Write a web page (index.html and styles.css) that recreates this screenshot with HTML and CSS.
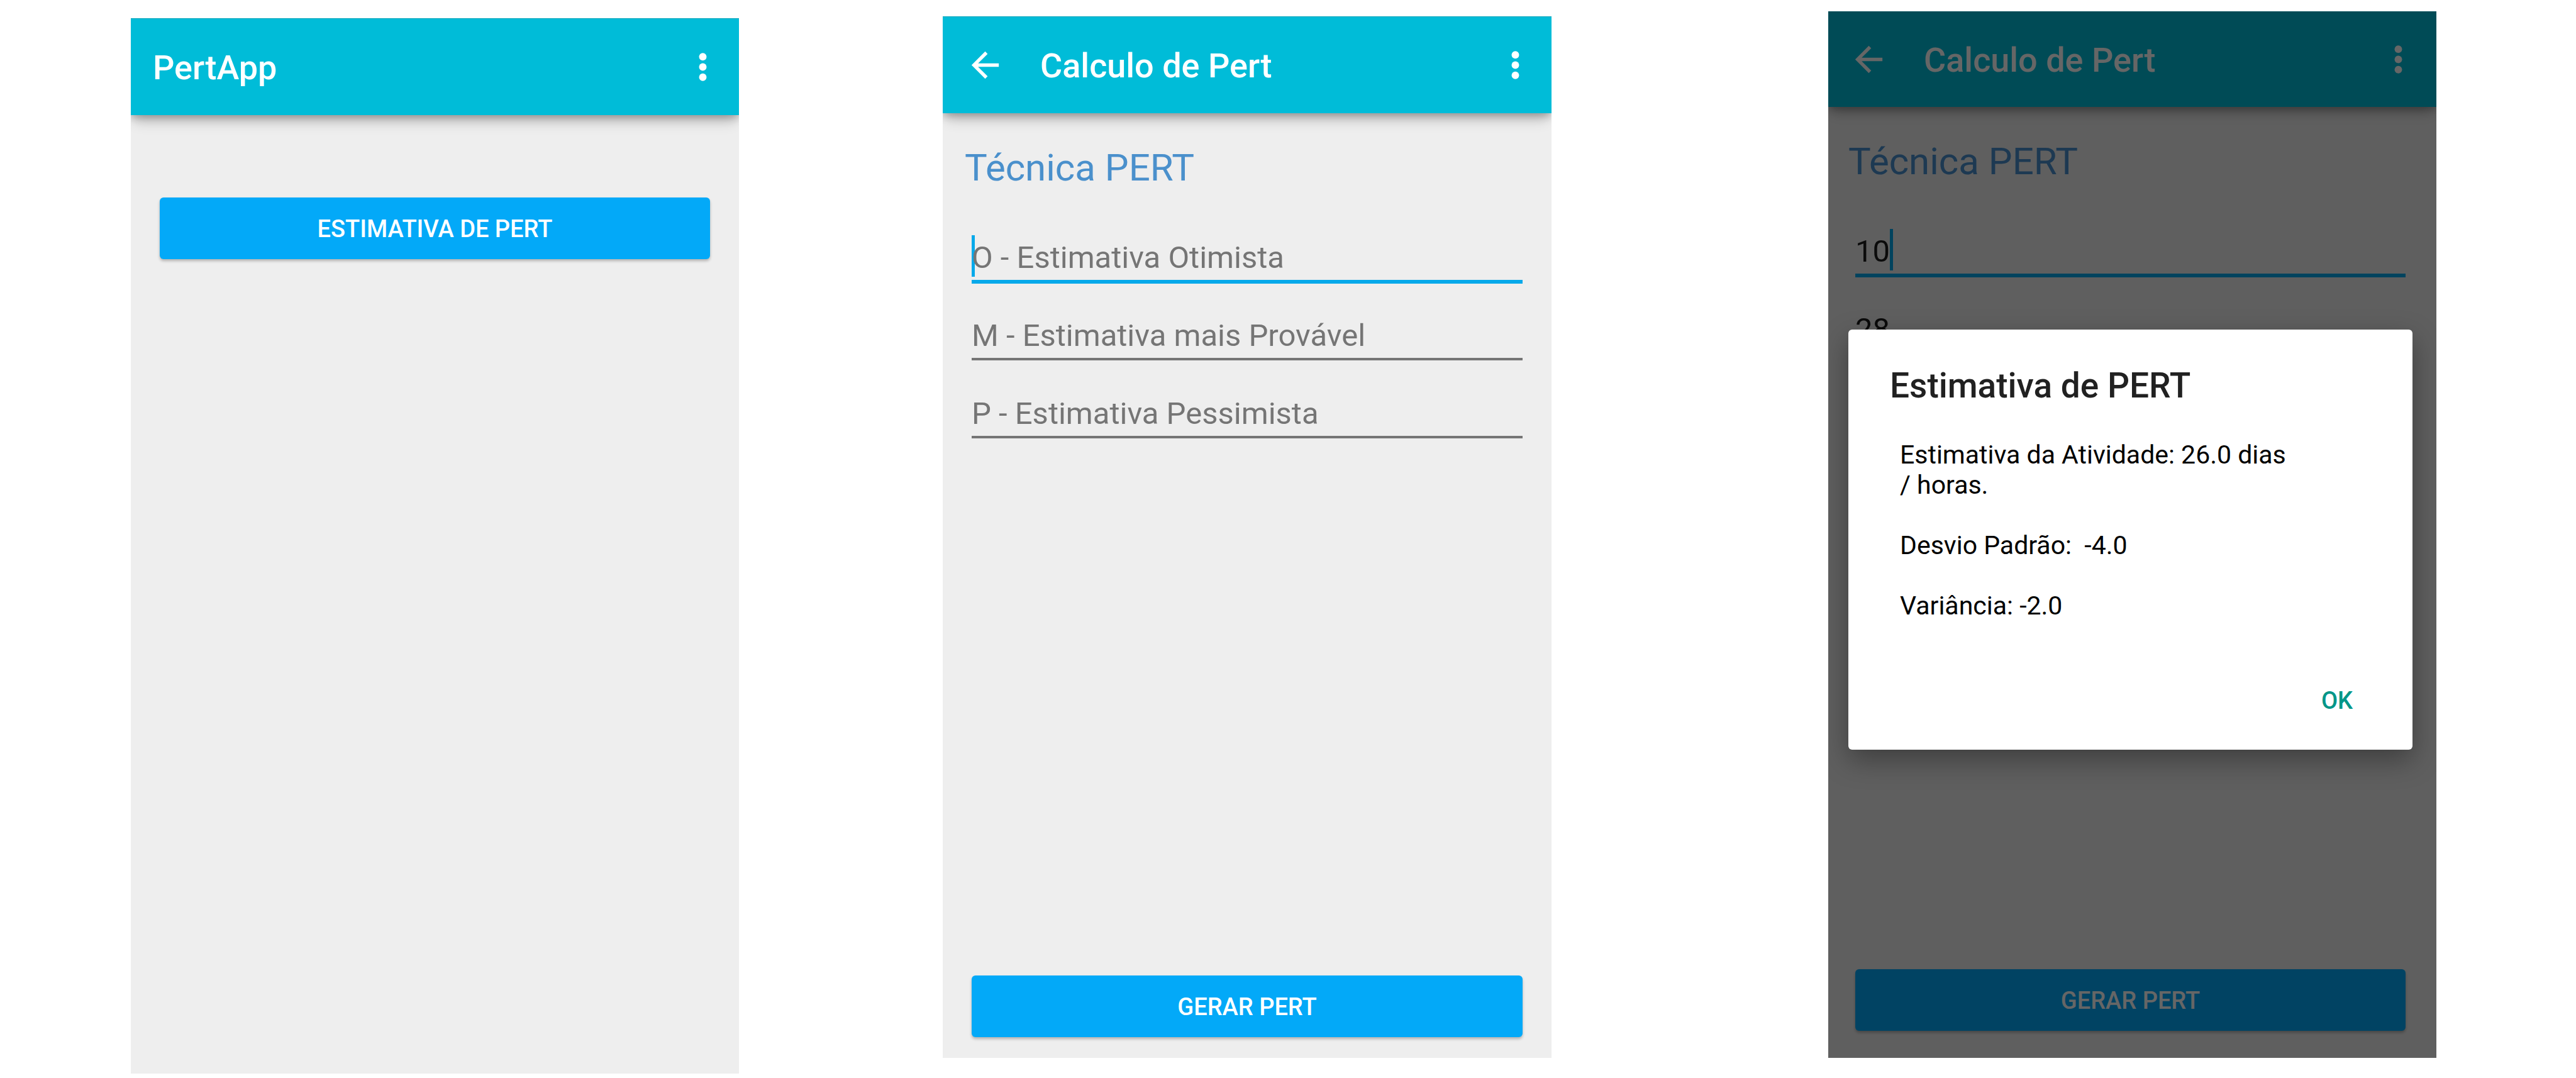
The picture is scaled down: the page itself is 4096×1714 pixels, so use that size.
FILE: index.html
```html
<!DOCTYPE html>
<html lang="pt-BR">
<head>
  <meta charset="utf-8">
  <title>PertApp</title>
  <meta name="viewport" content="width=device-width, initial-scale=1">
  <link rel="stylesheet" href="styles.css">
</head>
<body>
  <main class="gallery">
    <section class="phone phone-home">
      <header class="appbar">
        <h1 class="appbar-title">PertApp</h1>
        <button class="icon-button" type="button" aria-label="Menu">
          <svg class="icon" viewBox="0 0 24 24"><circle cx="12" cy="6" r="2.2"/><circle cx="12" cy="12" r="2.2"/><circle cx="12" cy="18" r="2.2"/></svg>
        </button>
      </header>
      <div class="content content-home">
        <button class="button" type="button">ESTIMATIVA DE PERT</button>
      </div>
    </section>

    <section class="phone phone-form">
      <header class="appbar">
        <button class="icon-button" type="button" aria-label="Voltar">
          <svg class="icon" viewBox="0 0 24 24"><path d="M20 11H7.83l5.59-5.59L12 4l-8 8 8 8 1.41-1.41L7.83 13H20v-2z"/></svg>
        </button>
        <h1 class="appbar-title">Calculo de Pert</h1>
        <button class="icon-button" type="button" aria-label="Menu">
          <svg class="icon" viewBox="0 0 24 24"><circle cx="12" cy="6" r="2.2"/><circle cx="12" cy="12" r="2.2"/><circle cx="12" cy="18" r="2.2"/></svg>
        </button>
      </header>
      <form class="content">
        <h2 class="heading">Técnica PERT</h2>
        <div class="fields">
          <div class="field">
            <span class="caret"></span>
            <input class="input input-active" type="text" aria-label="O - Estimativa Otimista" placeholder="O - Estimativa Otimista">
          </div>
          <div class="field">
            <input class="input" type="text" aria-label="M - Estimativa mais Provável" placeholder="M - Estimativa mais Provável">
          </div>
          <div class="field">
            <input class="input" type="text" aria-label="P - Estimativa Pessimista" placeholder="P - Estimativa Pessimista">
          </div>
        </div>
        <button class="button button-bottom" type="button">GERAR PERT</button>
      </form>
    </section>

    <section class="phone phone-result">
      <header class="appbar">
        <button class="icon-button" type="button" aria-label="Voltar">
          <svg class="icon" viewBox="0 0 24 24"><path d="M20 11H7.83l5.59-5.59L12 4l-8 8 8 8 1.41-1.41L7.83 13H20v-2z"/></svg>
        </button>
        <h1 class="appbar-title">Calculo de Pert</h1>
        <button class="icon-button" type="button" aria-label="Menu">
          <svg class="icon" viewBox="0 0 24 24"><circle cx="12" cy="6" r="2.2"/><circle cx="12" cy="12" r="2.2"/><circle cx="12" cy="18" r="2.2"/></svg>
        </button>
      </header>
      <form class="content">
        <h2 class="heading">Técnica PERT</h2>
        <div class="fields">
          <div class="field">
            <span class="caret caret-end"></span>
            <input class="input input-active" type="text" aria-label="O - Estimativa Otimista" value="10">
          </div>
          <div class="field">
            <input class="input" type="text" aria-label="M - Estimativa mais Provável" value="28">
          </div>
          <div class="field">
            <input class="input" type="text" aria-label="P - Estimativa Pessimista">
          </div>
        </div>
        <button class="button button-bottom" type="button">GERAR PERT</button>
      </form>
      <div class="scrim">
        <div class="dialog" role="dialog" aria-labelledby="dialog-title">
          <h2 class="dialog-title" id="dialog-title">Estimativa de PERT</h2>
          <div class="dialog-body">
            <p>Estimativa da Atividade: 26.0 dias / horas.</p>
            <p>Desvio Padrão:&nbsp; -4.0</p>
            <p>Variância: -2.0</p>
          </div>
          <button class="dialog-action" type="button">OK</button>
        </div>
      </div>
    </section>
  </main>
</body>
</html>
```

FILE: styles.css
```css
* {
  box-sizing: border-box;
}

body {
  margin: 0;
  background: #fff;
  font-family: Roboto, "Noto Sans", sans-serif;
}

h1,
h2,
p {
  margin: 0;
  font-weight: 400;
}

button,
input {
  margin: 0;
  padding: 0;
  border: 0;
  border-radius: 0;
  background: none;
  font-family: inherit;
}

/* Three screens side by side, with the gutters between them as columns */
.gallery {
  display: grid;
  grid-template-columns: 208fr 967fr 324fr 968fr 440fr 967fr 222fr;
  min-height: 100vh;
}

.phone {
  position: relative;
  display: flex;
  flex-direction: column;
  overflow: hidden;
  background: #eee;
}

.phone-home {
  grid-column: 2;
  margin: 29px 0 7px;
}

.phone-form {
  grid-column: 4;
  margin: 26px 0 32px;
}

.phone-result {
  grid-column: 6;
  margin: 18px 0 32px;
}

/* App bar */

.appbar {
  position: relative;
  display: flex;
  align-items: center;
  height: 154px;
  padding: 0 25px 0 35px;
  border-top: 1px solid #00a3b8;
  background: #00bcd8;
  box-shadow: 0 4px 12px rgba(0, 0, 0, 0.25), 0 16px 20px -6px rgba(0, 0, 0, 0.2);
  color: #fff;
}

.phone-result .appbar {
  height: 152px;
  padding: 0 28px 0 32px;
  border-top: 0;
}

.appbar-title {
  flex: 1;
  padding-top: 3px;
  font-size: 54px;
  font-weight: 500;
  line-height: 64px;
}

.icon-button + .appbar-title {
  padding-left: 55px;
}

.icon-button {
  width: 65px;
  height: 65px;
  color: inherit;
}

.icon {
  display: block;
  width: 65px;
  height: 65px;
  fill: currentColor;
}

/* Screen content */

.content {
  flex: 1;
  display: flex;
  flex-direction: column;
  padding: 51px 46px 33px;
}

.content-home {
  padding-top: 131px;
}

.phone-result .content {
  padding: 51px 49px 43px 43px;
}

.heading {
  margin-left: -11px;
  color: #4a90cc;
  font-size: 60px;
  line-height: 72px;
}

.fields {
  display: flex;
  flex-direction: column;
  gap: 50px;
  margin-top: 74px;
}

.field {
  position: relative;
  height: 74px;
}

.input {
  position: relative;
  display: block;
  width: 100%;
  height: 72px;
  padding-bottom: 4px;
  border-bottom: 4px solid #757575;
  outline: 0;
  color: #1c1c1c;
  font-size: 49px;
  line-height: 64px;
}

.input::placeholder {
  color: #757575;
  opacity: 1;
}

.input-active {
  height: 74px;
  border-bottom: 6px solid #06a9ea;
}

.caret {
  position: absolute;
  top: -3px;
  left: 0;
  width: 5px;
  height: 66px;
  background: #06a9ea;
}

.caret-end {
  left: 55px;
}

.button {
  height: 98px;
  padding-top: 2px;
  border-radius: 6px;
  background: #03a9f8;
  box-shadow: 0 3px 4px rgba(0, 0, 0, 0.25);
  color: #fff;
  font-size: 38px;
  font-weight: 500;
  line-height: 48px;
}

.button-bottom {
  margin-top: auto;
}

/* Result dialog */

.scrim {
  position: absolute;
  inset: 0;
  display: flex;
  align-items: center;
  padding: 16px 38px 0 32px;
  background: rgba(0, 0, 0, 0.6);
}

.dialog {
  flex: 1;
  display: flex;
  flex-direction: column;
  padding: 57px 64px 29px 66px;
  border-radius: 6px;
  background: #fff;
  box-shadow: 0 16px 44px rgba(0, 0, 0, 0.35);
}

.dialog-title {
  color: #212121;
  font-size: 55px;
  font-weight: 500;
  line-height: 64px;
}

.dialog-body {
  display: flex;
  flex-direction: column;
  gap: 48px;
  padding: 54px 124px 0 16px;
  color: #000;
  font-size: 41px;
  line-height: 48px;
}

.dialog-action {
  align-self: flex-end;
  width: 112px;
  height: 98px;
  margin-top: 78px;
  color: #009688;
  font-size: 38px;
  font-weight: 500;
}
```
